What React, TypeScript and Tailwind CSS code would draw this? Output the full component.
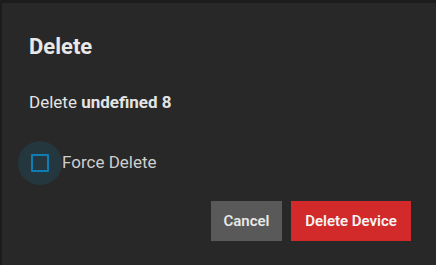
export default function App() {
  return (
    <div className="h-[265px] w-[436px] overflow-hidden bg-[#1c1c1c] pl-[2px] pt-[3px] font-['Roboto',sans-serif]">
      <div className="h-[262px] w-[434px] bg-[#282828] pl-[27px] pr-[25px] pt-[29px]">
        <h2 className="text-[22px] font-bold leading-[30px] text-[#e8e8e8]">Delete</h2>
        <p className="mt-[29px] text-[17px] leading-[22px] text-[#e4e4e4]">
          Delete <span className="font-bold">undefined 8</span>
        </p>
        <label className="mt-[28px] ml-[-11px] flex items-center">
          <span className="flex h-[44px] w-[44px] items-center justify-center rounded-full bg-[#24373f]">
            <span className="h-[18px] w-[18px] rounded-[1px] border-2 border-[#0f7db5]" />
          </span>
          <span className="text-[17px] text-[#cfcfcf]">Force Delete</span>
        </label>
        <div className="mt-[16px] flex justify-end gap-[9px]">
          <button className="h-[40px] w-[71px] bg-[#595959] text-[15px] font-semibold text-[#e8e8e8]">
            Cancel
          </button>
          <button className="h-[40px] w-[120px] bg-[#d22a2a] text-[15px] font-semibold text-[#f4f4f4]">
            Delete Device
          </button>
        </div>
      </div>
    </div>
  );
}
